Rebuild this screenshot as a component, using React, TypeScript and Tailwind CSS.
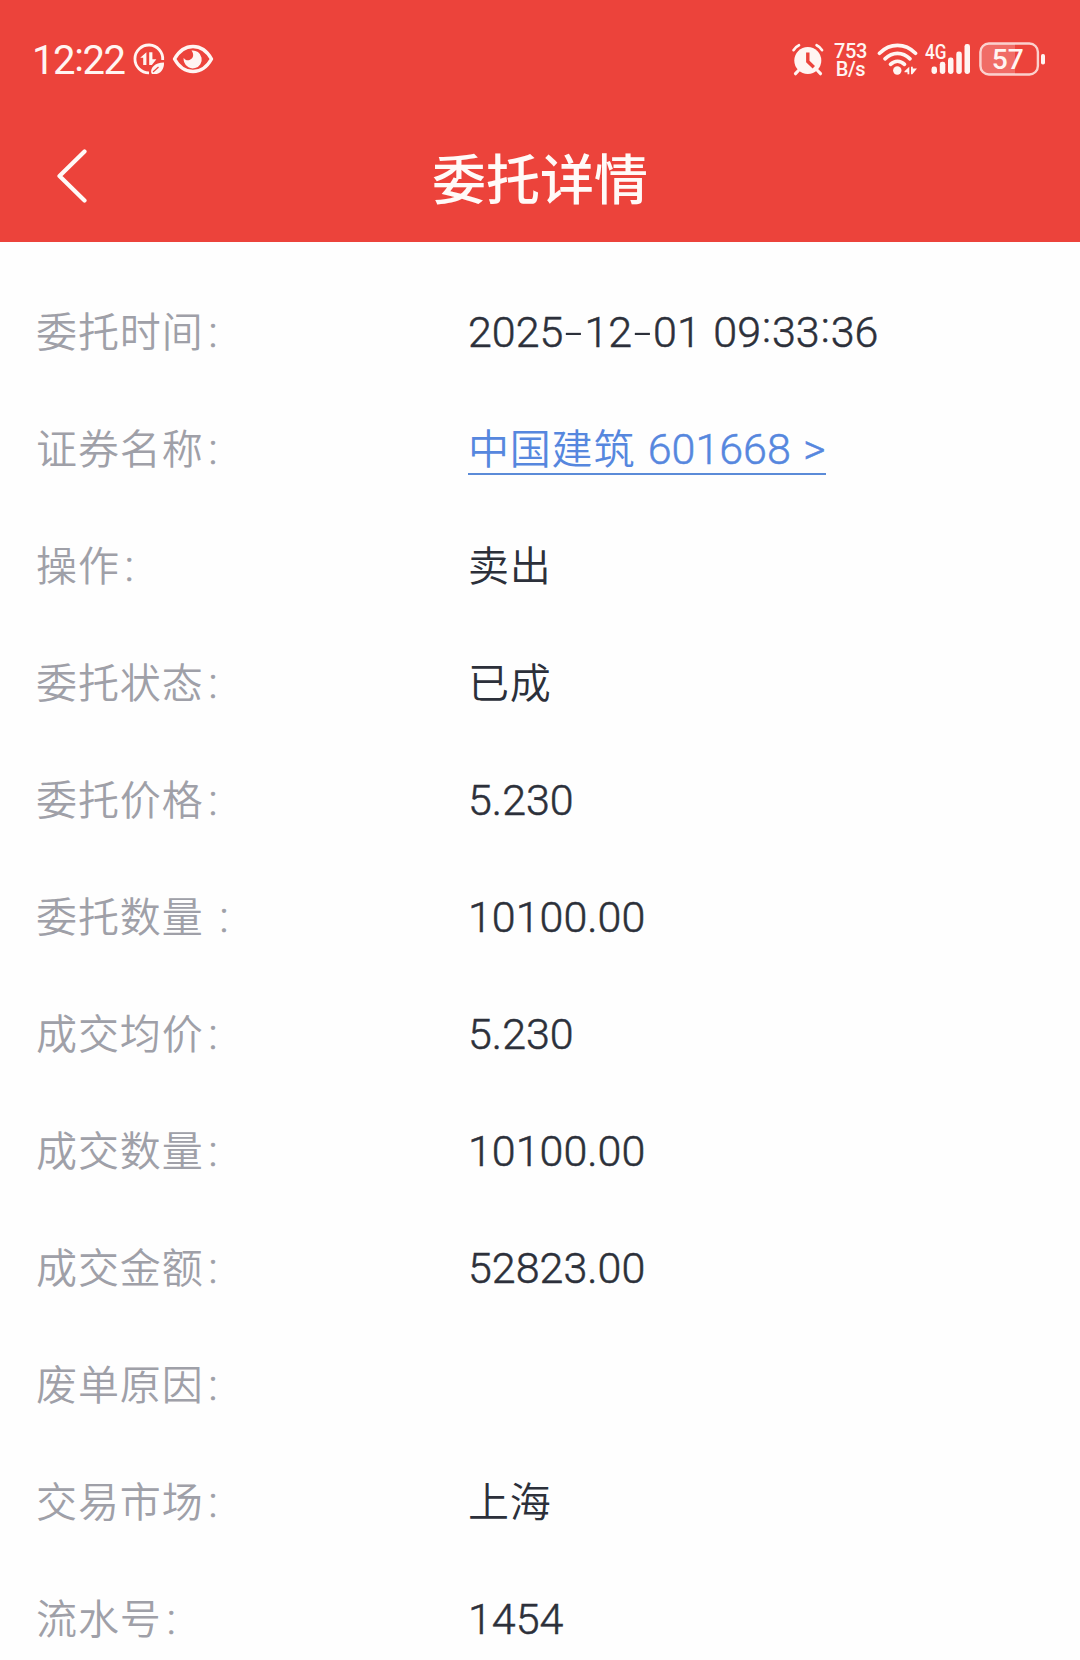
import { ReactNode } from 'react';

interface DetailItem {
  label: string;
  value: string;
  link?: boolean;
}

const items: DetailItem[] = [
  { label: '委托时间', value: '2025-12-01 09:33:36' },
  { label: '证券名称', value: '中国建筑 601668 >', link: true },
  { label: '操作', value: '卖出' },
  { label: '委托状态', value: '已成' },
  { label: '委托价格', value: '5.230' },
  { label: '委托数量 ', value: '10100.00' },
  { label: '成交均价', value: '5.230' },
  { label: '成交数量', value: '10100.00' },
  { label: '成交金额', value: '52823.00' },
  { label: '废单原因', value: '' },
  { label: '交易市场', value: '上海' },
  { label: '流水号', value: '1454' }
];

const DataSaverIcon = () => (
  <svg width="32" height="32" viewBox="0 0 32 32" fill="none" stroke="currentColor">
    <path d="M16 29.800A13.900 13.900 0 1 1 29.700 17" strokeWidth="2.800" />
    <path
      d="M7.200 14.800 13.400 9.300v12.700h-3.200v-7.200zM16.200 9.300h3.200v6.900h4l-4.500 5.800h-2.700z"
      fill="currentColor"
      stroke="none"
    />
    <path
      d="M18.300 30C17.300 24.500 21.500 19.800 31 19.400c.400 7-3.800 12.200-10.300 11.600l-1.700 0z"
      fill="currentColor"
      stroke="none"
    />
    <path d="m20 29 5.500-5" stroke="#ec433b" strokeWidth="1.200" />
  </svg>
);

const EyeIcon = () => (
  <svg width="42" height="30" viewBox="0 0 42 30" fill="none">
    <path
      d="M2.500 15C7.500 6 14 2.500 21 2.500S34.500 6 39.500 15C34.500 24 28 27.500 21 27.500S7.500 24 2.500 15z"
      stroke="currentColor"
      strokeWidth="3.400"
      strokeLinejoin="round"
    />
    <path
      d="M19.500 6.500a9 9 0 1 1-7.300 11.800c-.600-1.600-.800-3-.500-4.600 1.400 2.300 3.600 3.100 5.800 2.300 3.800-1.400 5-5.300 2-9.500z"
      fill="currentColor"
    />
  </svg>
);

const AlarmIcon = () => (
  <svg width="32" height="33" viewBox="0 0 32 33" fill="none" stroke="currentColor" strokeLinecap="round">
    <circle cx="15.800" cy="17.500" r="13.500" fill="currentColor" stroke="none" />
    <path d="M1.600 7.200Q3.500 3.800 7 2.200M30 7.200Q28.100 3.800 24.600 2.200" strokeWidth="2.700" />
    <path d="M6.500 27.500l-3 3.200M25.500 27.500l3 3.200" strokeWidth="3.200" />
    <path d="M15.800 9.500v9l6 5.800" stroke="#ec433b" strokeWidth="3.400" strokeLinecap="butt" />
  </svg>
);

const WifiIcon = () => (
  <svg width="41" height="33" viewBox="0 0 41 33" fill="none" stroke="currentColor" strokeLinecap="round">
    <path d="M2.500 10.200C13 -.300 28 -.300 38.500 10.200" strokeWidth="3.700" />
    <path d="M8 15.800c7.500-7.300 17.500-7.300 25 0" strokeWidth="3.700" />
    <path d="M13.500 21.300c4.200-4 9.800-4 14 0" strokeWidth="3.700" />
    <circle cx="20.300" cy="27.500" r="4.200" fill="currentColor" stroke="none" />
    <path
      d="M27.500 28.200 32.300 23.800v7.500h-1.800v-2.100h-3zM34 23.800h1.800v1.600h4.200l-4.600 5.900h-1.400z"
      fill="currentColor"
      stroke="none"
    />
  </svg>
);

const SignalIcon = () => (
  <svg className="overflow-visible" width="46" height="34" viewBox="0 0 46 34" fill="currentColor">
    <text
      x="0"
      y="16.500"
      fontFamily="Roboto, sans-serif"
      fontSize="20"
      fontWeight="500"
      textLength="21.500"
      lengthAdjust="spacingAndGlyphs">
      4G
    </text>
    <rect x="6.500" y="24.500" width="5.500" height="7.500" rx="2.400" />
    <rect x="14.800" y="19.800" width="5.500" height="12.200" rx="2.400" />
    <rect x="23" y="15.500" width="5.500" height="16.500" rx="2.400" />
    <rect x="31.300" y="9.500" width="5.500" height="22.500" rx="2.400" />
    <rect x="39.500" y="2" width="5.500" height="30" rx="2.400" />
  </svg>
);

const BatteryIcon = () => (
  <svg width="67" height="34" viewBox="0 0 67 34" fill="none">
    <path d="M36 2v30H10a8 8 0 0 1-8-8V10a8 8 0 0 1 8-8z" fill="white" fillOpacity=".22" />
    <rect x="1.400" y="1.500" width="57.500" height="31" rx="8.500" stroke="currentColor" strokeOpacity=".8" strokeWidth="2.400" />
    <rect x="62" y="12" width="4" height="10.500" rx="1.800" fill="currentColor" />
    <text
      x="12.800"
      y="27"
      fill="currentColor"
      fontFamily="Roboto, sans-serif"
      fontSize="28.500"
      fontWeight="500"
      textLength="32"
      lengthAdjust="spacingAndGlyphs">
      57
    </text>
  </svg>
);

const StatusBar = () => (
  <div className="flex h-[118px] items-center justify-between pr-[34px] pl-[32px] text-[#fff5f2]">
    <div className="flex items-center">
      <span className="w-[101px] pt-[3px] font-['Roboto',sans-serif] text-[40px] leading-none tracking-[-1.4px] whitespace-nowrap">
        12<span className="relative -top-[3px]">:</span>22
      </span>
      <DataSaverIcon />
      <span className="ml-[7px]">
        <EyeIcon />
      </span>
    </div>
    <div className="flex items-center">
      <AlarmIcon />
      <div className="ml-[10px] w-[33px] pt-[2px] text-center font-['Roboto',sans-serif] text-[20px] leading-[18px] font-medium tracking-[-0.4px] whitespace-nowrap">
        <div>753</div>
        <div>B/s</div>
      </div>
      <span className="ml-[10px]">
        <WifiIcon />
      </span>
      <span className="ml-[7px]">
        <SignalIcon />
      </span>
      <span className="ml-[8px]">
        <BatteryIcon />
      </span>
    </div>
  </div>
);

const TitleBar = () => (
  <div className="grid h-[124px] grid-cols-[1fr_auto_1fr] items-center pb-[8px] text-[#fffaf8]">
    <button className="ml-[56px] w-8" aria-label="返回">
      <svg width="32" height="54" viewBox="0 0 32 54" fill="none" stroke="currentColor" strokeWidth="4.200" strokeLinecap="round" strokeLinejoin="round">
        <path d="M28.500 2.500 3.500 27l25 24.500" />
      </svg>
    </button>
    <h1 className="pt-[11px] text-[54px] leading-none font-medium">委托详情</h1>
  </div>
);

// Latin runs are set a little larger than the Chinese ones, with a wide dash and a raised colon
const Value = ({ text }: { text: string }) => (
  <>
    {text.split(/([\u4e00-\u9fff]+|[-:])/).map((part, i) => {
      if (part === '-') {
        return (
          <span key={i} className="inline-block w-[21px] origin-center scale-x-150 text-center text-[43px]">
            -
          </span>
        );
      }
      if (part === ':') {
        return (
          <span
            key={i}
            className="relative -top-[5px] inline-block w-[11px] text-center text-[43px] [-webkit-text-stroke:0.5px]">
            :
          </span>
        );
      }
      return /[\u4e00-\u9fff]/.test(part) ? (
        <span key={i} className="tracking-[0.8px]">
          {part}
        </span>
      ) : (
        <span key={i} className="text-[43px] [word-spacing:2px] [-webkit-text-stroke:0.5px]">
          {part}
        </span>
      );
    })}
  </>
);

const DetailRow = ({ label, children }: { label: string; children?: ReactNode }) => (
  <div className="flex h-[117px] items-center">
    <div className="w-[432px] shrink-0 whitespace-pre text-[#9fa0a8]">
      <span className="tracking-[0.9px]">{label}</span>
      <span className="ml-[5px] text-[43px] [-webkit-text-stroke:0.6px]">:</span>
    </div>
    <div className="whitespace-nowrap text-[#2c303a]">{children}</div>
  </div>
);

export default function App() {
  return (
    <div className="h-[1660px] overflow-hidden bg-[#fefefe] font-['Roboto','Noto_Sans_CJK_SC',sans-serif]">
      <header className="bg-[#ec433b]">
        <StatusBar />
        <TitleBar />
      </header>
      <main className="pt-[32px] pl-[36px] text-[41px] leading-[60px] font-[350]">
        {items.map((item) => (
          <DetailRow key={item.label} label={item.label}>
            {item.link ? (
              <a className="inline-block border-b-2 border-[#5b8bd8] leading-[46px] text-[#5687de]">
                <Value text={item.value} />
              </a>
            ) : (
              <Value text={item.value} />
            )}
          </DetailRow>
        ))}
      </main>
    </div>
  );
}
